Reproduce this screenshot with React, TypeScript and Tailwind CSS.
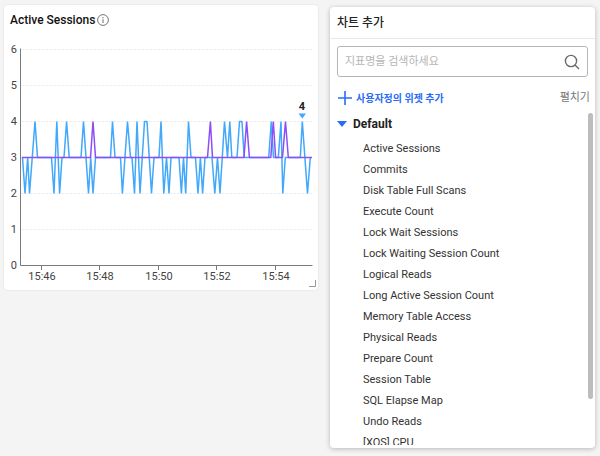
import React from "react";

type Point = [number, number];

const yOf = (value: number) => 265.5 - value * 36;
const toPoints = (points: Point[]) =>
  points.map(([x, value]) => `${x},${yOf(value)}`).join(" ");

const blueSeries: Point[] = [
  [22.5, 3], [25, 2], [27.7, 3], [29.5, 2], [35, 4], [37.5, 3], [51.5, 3], [54, 2],
  [56.8, 4], [59.6, 2], [62, 3], [64, 3], [66.6, 4], [69.2, 3], [81, 3], [83.5, 4],
  [88.5, 2], [90.7, 3], [93, 2], [95.5, 3], [110.5, 3], [112.5, 4], [115, 3],
  [120.5, 3], [122.4, 2], [127.5, 4], [130.5, 3], [132, 3], [134.5, 2], [137, 4],
  [140, 2], [144.5, 4], [147, 4], [151.5, 2], [154, 3], [159, 3], [161, 4],
  [163.8, 2], [166.5, 3], [169, 2], [171, 3], [179, 3], [181.4, 2], [183.5, 3],
  [185.7, 2], [188.5, 4], [191, 3], [195.5, 3], [198, 2], [200.4, 3], [202.6, 2],
  [205, 3], [212, 3], [214.8, 2], [217.5, 3], [220, 2], [224.5, 4], [227.5, 3],
  [229.8, 4], [231.8, 3], [237, 3], [239.5, 4], [242, 4], [244.2, 3], [268.7, 3],
  [271.3, 4], [273.5, 3], [278.3, 3], [281, 4], [282.8, 2], [285.3, 3], [300.3, 3],
  [302.3, 4], [307.5, 2], [310.3, 3],
];

const purpleSeries: Point[] = [
  [22, 3], [90.5, 3], [93, 4], [95.5, 3], [207.5, 3], [210.4, 4], [212.5, 3],
  [244, 3], [246.6, 4], [249.4, 3], [270.8, 3], [273.3, 4], [275.6, 3], [282.5, 3],
  [285.5, 4], [288.3, 3], [312, 3],
];

const ticks = [
  { x: 42, label: "15:46" },
  { x: 100, label: "15:48" },
  { x: 159, label: "15:50" },
  { x: 217, label: "15:52" },
  { x: 276, label: "15:54" },
];

const metrics = [
  "Active Sessions",
  "Commits",
  "Disk Table Full Scans",
  "Execute Count",
  "Lock Wait Sessions",
  "Lock Waiting Session Count",
  "Logical Reads",
  "Long Active Session Count",
  "Memory Table Access",
  "Physical Reads",
  "Prepare Count",
  "Session Table",
  "SQL Elapse Map",
  "Undo Reads",
  "[XOS] CPU",
];

function SessionsChart() {
  return (
    <svg viewBox="4 34 314 256" className="block h-auto w-full" role="img" aria-label="Active Sessions">
      {[1, 2, 3, 4, 5, 6].map((value) => (
        <line key={value} x1="21" x2="312" y1={yOf(value)} y2={yOf(value)} stroke="#f0f0f0" strokeDasharray="3 1" />
      ))}
      {[0, 1, 2, 3, 4, 5, 6].map((value) => (
        <text key={value} x="17" y={yOf(value) + 3} textAnchor="end" fontSize="11" fill="#444">
          {value}
        </text>
      ))}
      <path d="M20.5 48.5V265.5H312.5" fill="none" stroke="#7b7b7b" />
      {ticks.map(({ x, label }) => (
        <g key={label}>
          <line x1={x - 0.5} x2={x - 0.5} y1="266" y2="270" stroke="#7b7b7b" />
          <text x={x} y="280" textAnchor="middle" fontSize="11" fill="#444">
            {label}
          </text>
        </g>
      ))}
      <polyline points={toPoints(blueSeries)} fill="none" stroke="#41a8fb" strokeWidth="1.5" strokeLinejoin="bevel" />
      <polyline points={toPoints(purpleSeries)} fill="none" stroke="#8b4ff8" strokeWidth="1.5" strokeLinejoin="bevel" />
      <path d="M298.5 113.5H306L302.3 118.5Z" fill="#41a8fb" />
      <text x="302" y="110" textAnchor="middle" fontSize="11" fontWeight="700" fill="#222">
        4
      </text>
      <path d="M309 286.5H315.5V280" fill="none" stroke="#999" />
    </svg>
  );
}

export default function App() {
  return (
    <main className="flex h-screen items-start gap-3 bg-[#f4f4f4] pr-[5px] pl-1 font-['Roboto','Noto_Sans_CJK_KR',sans-serif] text-[#333]">
      <section className="mt-[5px] min-w-0 flex-1 rounded-sm bg-white shadow-[0_0_2px_rgba(0,0,0,0.12)]">
        <header className="flex h-[29px] items-center gap-0.5 pl-1.5">
          <h2 className="text-xs font-medium text-[#111]">Active Sessions</h2>
          <button type="button" aria-label="Info">
            <svg viewBox="0 0 12 12" className="block size-3 overflow-visible" fill="none" stroke="#777">
              <circle cx="6" cy="6" r="5.4" />
              <path d="M6 5.2V9M6 3V4.2" strokeWidth="1.1" />
            </svg>
          </button>
        </header>
        <SessionsChart />
      </section>

      <aside className="mt-[7px] mb-2 flex w-[265px] shrink-0 flex-col self-stretch rounded bg-white shadow-[0_1px_5px_rgba(0,0,0,0.25)]">
        <header className="flex h-8 items-center border-b border-[#e8e8e8] px-[7px]">
          <h2 className="text-xs font-medium text-[#222]">차트 추가</h2>
        </header>

        <div className="mx-[7px] mt-[7px] flex h-[31px] shrink-0 items-center rounded-[3px] border border-[#b5b5b5] px-[7px]">
          <input
            type="text"
            aria-label="지표명 검색"
            placeholder="지표명을 검색하세요"
            className="h-full min-w-0 flex-1 text-[11px] outline-none placeholder:text-[#b5b5b5]"
          />
          <button type="button" aria-label="검색">
            <svg viewBox="0 0 16 16" className="block size-4" fill="none" stroke="#6b6b6b" strokeWidth="1.4">
              <circle cx="7" cy="7" r="5.6" />
              <path d="M11 11L15 15" />
            </svg>
          </button>
        </div>

        <div className="mt-[11px] flex h-5 shrink-0 items-center justify-between pr-[5px] pl-2">
          <button type="button" className="flex items-center gap-1 text-[10px] font-bold text-[#2a6cf6]">
            <svg viewBox="0 0 14 14" className="block size-3.5" fill="none" stroke="#2a6cf6" strokeWidth="1.6">
              <path d="M7 0V14M0 7H14" />
            </svg>
            사용자정의 위젯 추가
          </button>
          <button type="button" className="text-[11px] text-[#777]">
            펼치기
          </button>
        </div>

        <div className="mt-1 mb-[3px] flex min-h-0 flex-1 pr-0.5">
          <div className="min-w-0 flex-1 overflow-x-hidden overflow-y-auto [scrollbar-width:none]">
            <button type="button" className="flex h-6 items-center gap-1.5 pl-[7px] text-xs font-bold text-[#222]">
              <svg viewBox="0 0 10 6" className="block h-1.5 w-2.5">
                <path d="M0 0H10L5 6Z" fill="#2a6cf6" />
              </svg>
              Default
            </button>
            <ul className="mt-0.5">
              {metrics.map((metric) => (
                <li key={metric} className="h-[21px] pl-[33px] text-[11px] leading-[21px]">
                  {metric}
                </li>
              ))}
            </ul>
          </div>
          <div className="mt-px h-[86%] w-[5px] rounded-full bg-[#bdbdbd]" />
        </div>
      </aside>
    </main>
  );
}
